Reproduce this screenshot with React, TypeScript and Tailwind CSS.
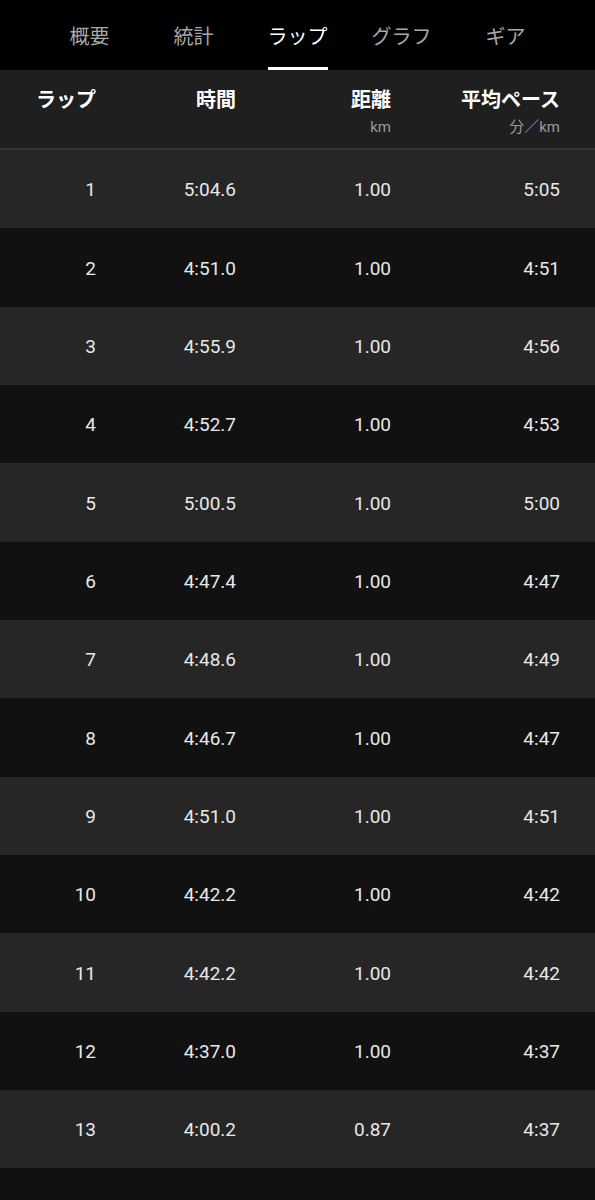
import React from "react";

const tabs = ["概要", "統計", "ラップ", "グラフ", "ギア"];
const rows: [string, string, string, string][] = [
  ["1", "5:04.6", "1.00", "5:05"],
  ["2", "4:51.0", "1.00", "4:51"],
  ["3", "4:55.9", "1.00", "4:56"],
  ["4", "4:52.7", "1.00", "4:53"],
  ["5", "5:00.5", "1.00", "5:00"],
  ["6", "4:47.4", "1.00", "4:47"],
  ["7", "4:48.6", "1.00", "4:49"],
  ["8", "4:46.7", "1.00", "4:47"],
  ["9", "4:51.0", "1.00", "4:51"],
  ["10", "4:42.2", "1.00", "4:42"],
  ["11", "4:42.2", "1.00", "4:42"],
  ["12", "4:37.0", "1.00", "4:37"],
  ["13", "4:00.2", "0.87", "4:37"],
];

const font = { fontFamily: '"Roboto", "Noto Sans CJK JP", sans-serif' };

export default function App() {
  return (
    <div className="w-[595px] h-[1200px] overflow-hidden bg-[#111111]" style={font}>
      <div className="h-[70px] bg-black flex justify-center">
        {tabs.map((t, i) => (
          <div key={t} className="w-[104px] h-[70px] flex flex-col items-center">
            <div
              className={`mt-[22px] text-[20px] leading-[30px] ${
                i === 2 ? "text-white" : "text-[#a8a8a8]"
              }`}
            >
              {t}
            </div>
            {i === 2 && <div className="mt-auto mb-0 w-[60px] h-[3px] bg-white" />}
          </div>
        ))}
      </div>
      <div className="h-[80px] bg-[#1f1f1f] border-b-2 border-[#363636] grid grid-cols-[96px_140px_155px_169px] text-right">
        <div className="pt-[16px] text-[20px] leading-[28px] font-bold text-white">ラップ</div>
        <div className="pt-[16px] text-[20px] leading-[28px] font-bold text-white">時間</div>
        <div className="pt-[16px]">
          <div className="text-[20px] leading-[28px] font-bold text-white">距離</div>
          <div className="text-[15px] leading-[20px] text-[#9a9a9a] mt-[3px]">km</div>
        </div>
        <div className="pt-[16px]">
          <div className="text-[20px] leading-[28px] font-bold text-white">平均ペース</div>
          <div className="text-[15px] leading-[20px] text-[#9a9a9a] mt-[3px]">分／km</div>
        </div>
      </div>
      {rows.map((r, i) => (
        <div
          key={r[0]}
          className={`h-[78.33px] pt-[3px] grid grid-cols-[96px_140px_155px_169px] items-center text-right text-[19px] text-[#e8e8e8] ${
            i % 2 === 0 ? "bg-[#262626]" : "bg-[#111111]"
          }`}
        >
          <div>{r[0]}</div>
          <div>{r[1]}</div>
          <div>{r[2]}</div>
          <div>{r[3]}</div>
        </div>
      ))}
      <div className="h-[40px] bg-[#111111]" />
    </div>
  );
}
